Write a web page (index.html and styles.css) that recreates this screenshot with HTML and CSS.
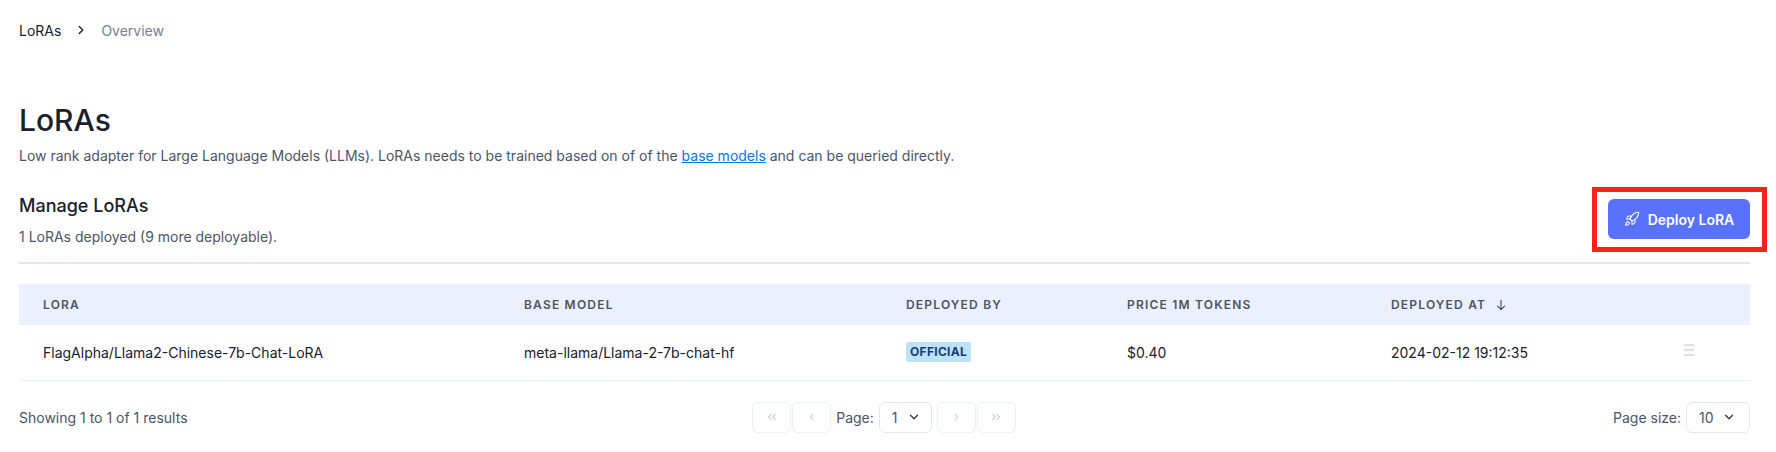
FILE: index.html
```html
<!DOCTYPE html>
<html lang="en">
<head>
  <meta charset="UTF-8" />
  <title>LoRAs</title>
  <link rel="stylesheet" href="styles.css">
</head>
<body>
  <nav class="breadcrumb">
    <span class="crumb">LoRAs</span>
    <svg class="crumb-sep" viewBox="0 0 24 24"><path d="M9 6l6 6-6 6"/></svg>
    <span class="crumb-current">Overview</span>
  </nav>

  <h1>LoRAs</h1>
  <p class="intro">Low rank adapter for Large Language Models (LLMs). LoRAs needs to be trained based on of of the <a href="#">base models</a> and can be queried directly.</p>

  <div class="manage">
    <div>
      <h2>Manage LoRAs</h2>
      <p class="count">1 LoRAs deployed (9 more deployable).</p>
    </div>
    <button class="deploy">
      <svg viewBox="0 0 24 24"><path d="M4.5 16.5c-1.5 1.3-2 5-2 5s3.700-.5 5-2c.7-.8.7-2.100-.1-2.900a2.200 2.200 0 0 0-2.900-.1z"/><path d="M12 15l-3-3a22 22 0 0 1 2-3.950A12.900 12.900 0 0 1 22 2c0 2.700-.8 7.500-6 11a22.400 22.400 0 0 1-4 2z"/><path d="M9 12H4s.55-3 2-4c1.600-1.100 5 0 5 0"/><path d="M12 15v5s3-.55 4-2c1.100-1.600 0-5 0-5"/></svg>
      Deploy LoRA
    </button>
  </div>
  <div class="highlight"></div>

  <table>
    <colgroup>
      <col class="col-lora"><col class="col-base"><col class="col-by"><col class="col-price"><col class="col-at"><col>
    </colgroup>
    <thead>
      <tr>
        <th>LoRA</th>
        <th>Base model</th>
        <th>Deployed by</th>
        <th>Price 1M tokens</th>
        <th>Deployed at <svg class="sort" viewBox="0 0 24 24"><path d="M12 4v16M6 14l6 6 6-6"/></svg></th>
        <th></th>
      </tr>
    </thead>
    <tbody>
      <tr>
        <td>FlagAlpha/Llama2-Chinese-7b-Chat-LoRA</td>
        <td>meta-llama/Llama-2-7b-chat-hf</td>
        <td><span class="badge">OFFICIAL</span></td>
        <td>$0.40</td>
        <td>2024-02-12 19:12:35</td>
        <td><div class="row-menu"><i></i><i></i><i></i></div></td>
      </tr>
    </tbody>
  </table>

  <div class="pager">
    <div class="results">Showing 1 to 1 of 1 results</div>
    <div class="pages">
      <span class="page-btn"><svg viewBox="0 0 24 24"><path d="M11 7l-5 5 5 5M18 7l-5 5 5 5"/></svg></span>
      <span class="page-btn"><svg viewBox="0 0 24 24"><path d="M14 7l-5 5 5 5"/></svg></span>
      <span class="page-label">Page:</span>
      <span class="select select-page">1 <svg viewBox="0 0 24 24"><path d="M6 9l6 6 6-6"/></svg></span>
      <span class="page-btn next"><svg viewBox="0 0 24 24"><path d="M10 7l5 5-5 5"/></svg></span>
      <span class="page-btn"><svg viewBox="0 0 24 24"><path d="M6 7l5 5-5 5M13 7l5 5-5 5"/></svg></span>
    </div>
    <div class="size">
      <span class="page-label">Page size:</span>
      <span class="select select-size">10 <svg viewBox="0 0 24 24"><path d="M6 9l6 6 6-6"/></svg></span>
    </div>
  </div>
</body>
</html>
```

FILE: styles.css
```css
* {
  box-sizing: border-box;
}

html, body {
  height: 452px;
  overflow: hidden;
}

body {
  margin: 0;
  padding: 0 26px 0 19px;
  position: relative;
  background: #ffffff;
  color: #1a202c;
  font-family: Inter, sans-serif;
  font-size: 14px;
}

svg {
  fill: none;
  stroke: currentColor;
  stroke-linecap: round;
  stroke-linejoin: round;
}

.breadcrumb {
  display: flex;
  align-items: center;
  height: 20px;
  margin-top: 20px;
  font-size: 14px;
}

.crumb-sep {
  width: 14px;
  height: 14px;
  margin: 0 13px 0 13px;
  stroke-width: 2.4;
  color: #1a202c;
}

.crumb-current {
  color: #718096;
}

h1 {
  margin: 62px 0 0;
  font-size: 30px;
  line-height: 36px;
  font-weight: 500;
}

.intro {
  margin: 8px 0 0;
  line-height: 20px;
  color: #4a5568;
}

.intro a {
  color: #0078e0;
}

.manage {
  display: flex;
  justify-content: space-between;
  align-items: center;
  height: 81px;
  margin-top: 17px;
  padding-bottom: 7px;
  border-bottom: 2px solid #e2e8f0;
}

h2 {
  margin: 0;
  font-size: 18px;
  line-height: 28px;
  font-weight: 500;
}

.count {
  margin: 7px 0 0;
  line-height: 20px;
  color: #4a5568;
}

.deploy {
  display: flex;
  align-items: center;
  justify-content: center;
  gap: 8px;
  width: 142px;
  height: 40px;
  border: none;
  border-radius: 6px;
  background: #5a72fb;
  color: #ffffff;
  font-family: inherit;
  font-size: 14px;
  font-weight: 600;
}

.deploy svg {
  width: 16px;
  height: 16px;
  stroke-width: 1.6;
}

.highlight {
  position: absolute;
  left: 1592px;
  top: 187px;
  width: 175px;
  height: 65px;
  border: 5px solid #f7231a;
}

table {
  width: 100%;
  margin-top: 20px;
  border-collapse: collapse;
  table-layout: fixed;
}

.col-lora { width: 481px; }
.col-base { width: 382px; }
.col-by { width: 221px; }
.col-price { width: 264px; }
.col-at { width: 293px; }

th {
  height: 41px;
  padding: 0 24px;
  background: #ebf0fc;
  color: #4a5568;
  font-size: 12px;
  font-weight: 600;
  letter-spacing: 1.2px;
  text-align: left;
  text-transform: uppercase;
  white-space: nowrap;
}

.sort {
  width: 14px;
  height: 14px;
  margin-left: 4px;
  stroke-width: 2;
  vertical-align: -3px;
}

td {
  height: 55px;
  padding: 0 24px;
  border-bottom: 1px solid #edf2f7;
  color: #1a202c;
  white-space: nowrap;
}

.badge {
  display: inline-block;
  padding: 0 4px;
  border-radius: 2px;
  background: #bee3f8;
  color: #153e75;
  font-size: 12px;
  line-height: 20px;
  font-weight: 700;
  letter-spacing: 0.3px;
}

.row-menu {
  display: flex;
  flex-direction: column;
  gap: 3px;
  width: 10px;
  margin: 0 0 4px 0;
}

.row-menu i {
  height: 2px;
  background: #dfe1e5;
}

.pager {
  display: grid;
  grid-template-columns: 1fr auto 1fr;
  align-items: center;
  margin-top: 21px;
  color: #4a5568;
}

.pages, .size {
  display: flex;
  align-items: center;
}

.size {
  justify-content: flex-end;
}

.page-btn {
  display: flex;
  align-items: center;
  justify-content: center;
  width: 39px;
  height: 31px;
  margin-right: 1px;
  border: 1px solid #edf2f7;
  border-radius: 6px;
  color: #a0aec0;
}

.page-btn svg {
  width: 14px;
  height: 14px;
  stroke-width: 1.5;
}

.page-btn.next {
  margin-left: 5px;
}

.page-label {
  margin: 0 5px 0 4px;
}

.select {
  display: flex;
  align-items: center;
  justify-content: space-between;
  height: 31px;
  border: 1px solid #e2e8f0;
  border-radius: 6px;
}

.select svg {
  width: 14px;
  height: 14px;
  stroke-width: 2.2;
  color: #2d3748;
}

.select-page {
  width: 53px;
  padding: 0 10px 0 12px;
}

.select-size {
  width: 64px;
  padding: 0 13px 0 12px;
}
```
